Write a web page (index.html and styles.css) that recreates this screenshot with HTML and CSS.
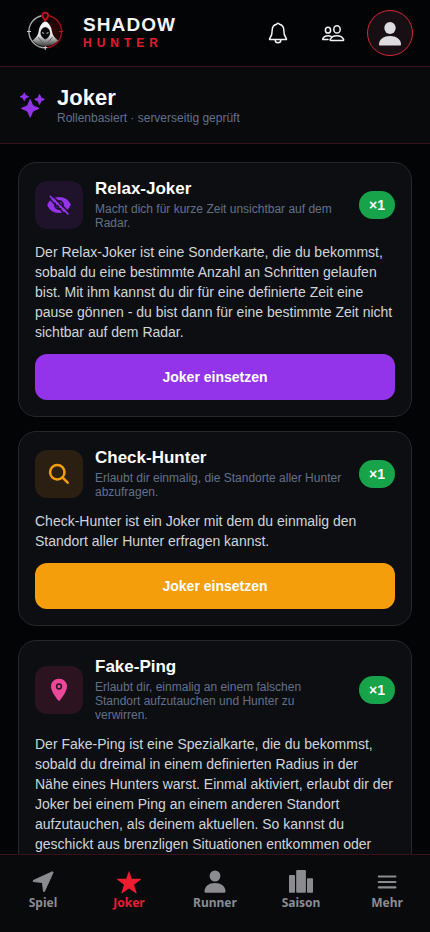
FILE: index.html
```html
<!DOCTYPE html>
<html lang="de">
<head>
<meta charset="utf-8">
<meta name="viewport" content="width=device-width, initial-scale=1">
<title>Shadow Hunter</title>
<link rel="stylesheet" href="styles.css">
</head>
<body>
<div class="app">
  <header class="topbar">
    <svg class="logo" viewBox="0 0 50 50">
      <defs>
        <linearGradient id="cloak" x1="0" y1="0" x2="0" y2="1"><stop offset="0" stop-color="#ffffff"/><stop offset=".6" stop-color="#dcdcdc"/><stop offset="1" stop-color="#3a3a3a"/></linearGradient>
        <radialGradient id="glow"><stop offset="0" stop-color="#350305"/><stop offset="1" stop-color="#150204"/></radialGradient>
      </defs>
      <path d="M25.300 10a16.200 16.200 0 0 1 0 33z" fill="url(#glow)"/>
      <path d="M21.500 10.700A16.200 16.200 0 0 0 25.300 42.700" fill="none" stroke="#a8a8a8" stroke-width="1.400"/>
      <path d="M29 10.700A16.200 16.200 0 0 1 25.300 42.700" fill="none" stroke="#a0121b" stroke-width="1.400"/>
      <path d="M7 26.500h4M25.300 40v5M23.300 42.500h4" stroke="#ccc" stroke-width="1"/>
      <path d="M39 26.500h4" stroke="#b5161f" stroke-width="1"/>
      <path d="M25.300 16c-4 2-6 5.500-6.700 10.500-.5 4-2.800 6.500-6.100 9 3.200 3.500 7.600 5.700 12.800 5.700s9.600-2.200 12.800-5.700c-3.300-2.500-5.600-5-6.100-9-.7-5-2.700-8.500-6.700-10.500z" fill="url(#cloak)"/>
      <path d="M25.300 22c-3 .8-4.600 2.800-4.800 5.800-.1 3.200 2.200 5.400 4.800 6.700 2.600-1.300 4.900-3.500 4.800-6.700-.2-3-1.800-5-4.800-5.800z" fill="#090a0b"/>
      <path d="M21.900 27l2.300 1-.2.700-1.700-.4zM28.700 27l-2.300 1 .2.700 1.700-.4z" fill="#ddd"/>
      <path d="M18 32l5 6M32.600 32l-5 6" stroke="#555" stroke-width=".9"/>
      <path d="M25.300 15.700c-1.700-2.300-2.900-3.300-2.900-5.100a2.900 2.900 0 0 1 5.800 0c0 1.800-1.200 2.800-2.900 5.100z" fill="#240305" stroke="#c8131d" stroke-width="1.700"/>
    </svg>
    <div class="brand">
      <div class="brand-main">SHADOW</div>
      <div class="brand-sub">HUNTER</div>
    </div>
    <svg class="bell" viewBox="0 0 22 24" fill="none" stroke="#f4f4f4" stroke-width="1.500" stroke-linecap="round" stroke-linejoin="round">
      <path d="M11 2.200c-.8 0-1.200.5-1.400 1.100C6.700 4 5.200 6.300 5.200 9.300c0 4.200-.8 5.700-1.900 7.200-.6.800-1 1.200-.8 1.700.1.300.4.400.8.400h15.400c.4 0 .7-.1.800-.4.200-.5-.2-.9-.8-1.700-1.100-1.500-1.900-3-1.900-7.200 0-3-1.500-5.300-4.400-6-.2-.6-.6-1.100-1.400-1.100zM8.200 19a2.800 2.800 0 0 0 5.600 0"/>
    </svg>
    <svg class="people" viewBox="0 0 24 18" fill="none" stroke="#f4f4f4" stroke-width="1.500" stroke-linejoin="round" stroke-linecap="round">
      <ellipse cx="7" cy="5.200" rx="2.600" ry="2.900"/><ellipse cx="16" cy="4.400" rx="3.200" ry="3.600"/>
      <path d="M9.700 15.500h12.400c.5 0 .7-.4.500-.9-.9-2.300-3.600-3.900-6.700-3.900s-5.800 1.600-6.700 3.900c-.2.500 0 .9.500.9zM10 11.300c-.8-.4-1.800-.6-2.800-.6-2.600 0-4.800 1.300-5.500 3.200-.1.400.1.700.5.700H7"/>
    </svg>
    <div class="avatar"><svg viewBox="0 0 24 26" fill="#dedce0"><ellipse cx="12" cy="7" rx="5.700" ry="6"/><path d="M1 23.500C1 18 6 15 12 15s11 3 11 8.500c0 .5-.2.900-.7.900H1.700c-.5 0-.7-.4-.7-.9z"/></svg></div>
  </header>

  <section class="page-head">
    <svg class="sparkles" viewBox="0 0 26 26" fill="#9333ea" stroke="#9333ea" stroke-linejoin="round">
      <path d="M11.200 7.500L13.300 12.400Q13.900 13.800 15.300 14.400L20 16.400L15.300 18.400Q13.900 19 13.300 20.400L11.200 25.300L9.100 20.400Q8.500 19 7.100 18.400L2.400 16.400L7.100 14.400Q8.500 13.800 9.100 12.400z"/>
      <path d="M5.300.8L6.300 3.300L9.500 4.700L6.500 6L5.300 8.700L4.100 6L1.100 4.700L4.300 3.300z"/>
      <path d="M20.500 2.400L22 5.900L25.300 7.400L22 8.900L20.500 12.400L19 8.900L15.700 7.400L19 5.900z"/>
    </svg>
    <div>
      <h1>Joker</h1>
      <p>Rollenbasiert · serverseitig geprüft</p>
    </div>
  </section>

  <main class="cards">
    <article class="card">
      <div class="card-head">
        <div class="tile purple">
          <svg viewBox="0 0 24 24"><path d="M.2 12C2.200 6.700 6.500 4 12 4S21.800 7 23.800 11.500C21.800 17 17.500 19.900 12 19.900S2.200 17.300.2 12z" fill="#9333ea"/><circle cx="12" cy="12" r="4.100" fill="#9333ea" stroke="#211330" stroke-width="1.700"/><circle cx="12" cy="12" r="2" fill="#211330"/><path d="M1.500 4.700L19 22.200M5 2.200L22 19.200" stroke="#1e132b" stroke-width="1.500"/><path d="M3.300 3.300L20.900 20.900" stroke="#9333ea" stroke-width="1.700" stroke-linecap="round"/></svg>
        </div>
        <div class="card-title"><h2>Relax-Joker</h2><p>Macht dich für kurze Zeit unsichtbar auf dem<br>Radar.</p></div>
        <span class="count">×1</span>
      </div>
      <p class="body">Der Relax-Joker ist eine Sonderkarte, die du bekommst,<br>sobald du eine bestimmte Anzahl an Schritten gelaufen<br>bist. Mit ihm kannst du dir für eine definierte Zeit eine<br>pause gönnen - du bist dann für eine bestimmte Zeit nicht<br>sichtbar auf dem Radar.</p>
      <button class="use use-purple">Joker einsetzen</button>
    </article>

    <article class="card">
      <div class="card-head">
        <div class="tile orange">
          <svg viewBox="0 0 24 24" fill="none" stroke="#f59e0b" stroke-width="2.500" stroke-linecap="round"><circle cx="10.300" cy="10.200" r="7.200"/><path d="M15.700 15.600l5 5"/></svg>
        </div>
        <div class="card-title"><h2>Check-Hunter</h2><p>Erlaubt dir einmalig, die Standorte aller Hunter<br>abzufragen.</p></div>
        <span class="count">×1</span>
      </div>
      <p class="body">Check-Hunter ist ein Joker mit dem du einmalig den<br>Standort aller Hunter erfragen kannst.</p>
      <button class="use use-orange">Joker einsetzen</button>
    </article>

    <article class="card">
      <div class="card-head">
        <div class="tile pink">
          <svg viewBox="0 0 24 24"><path d="M12 .8c-4.500 0-8 3.200-8 7.400 0 5.100 5.300 11.900 7.300 14.400.4.500 1 .5 1.400 0C14.700 20.100 20 13.300 20 8.200 20 4 16.500.8 12 .8z" fill="#ec4899"/><circle cx="12" cy="8.500" r="2.400" fill="#ec4899" stroke="#2b1420" stroke-width="1.500"/></svg>
        </div>
        <div class="card-title"><h2>Fake-Ping</h2><p>Erlaubt dir, einmalig an einem falschen<br>Standort aufzutauchen und Hunter zu<br>verwirren.</p></div>
        <span class="count">×1</span>
      </div>
      <p class="body">Der Fake-Ping ist eine Spezialkarte, die du bekommst,<br>sobald du dreimal in einem definierten Radius in der<br>Nähe eines Hunters warst. Einmal aktiviert, erlaubt dir der<br>Joker bei einem Ping an einem anderen Standort<br>aufzutauchen, als deinem aktuellen. So kannst du<br>geschickt aus brenzligen Situationen entkommen oder</p>
    </article>
  </main>

  <nav class="tabs">
    <a class="tab"><svg viewBox="0 0 24 24"><path d="M21.500 1.700L2.300 10.500L2.300 11.500L11.500 12.500L12.500 21.500L13.400 21.500L22.100 2.400z" stroke="currentColor" stroke-width="1" stroke-linejoin="round"/></svg><span>Spiel</span></a>
    <a class="tab active"><svg viewBox="0 0 24 24"><path d="M12 .8l2.800 8h8.500c.7 0 .8.500.4.900l-6.700 5 2.600 8c.2.600-.3.900-.8.600L12 18.400l-6.800 4.900c-.5.300-1 0-.8-.6l2.600-8-6.700-5c-.4-.4-.3-.9.400-.9h8.500z"/></svg><span>Joker</span></a>
    <a class="tab"><svg viewBox="0 0 24 24"><ellipse cx="12" cy="6" rx="5.400" ry="5.600"/><path d="M1.500 21.500c0-5.200 4.500-8.400 10.500-8.400s10.500 3.200 10.500 8.400c0 .7-.3 1.200-1 1.200h-19c-.7 0-1-.5-1-1.200z"/></svg><span>Runner</span></a>
    <a class="tab"><svg viewBox="0 0 24 24"><rect x="0" y="5" width="6" height="17.800" rx=".8"/><rect x="7.200" y="0" width="9.700" height="22.800" rx="1"/><rect x="18" y="8.200" width="6" height="14.600" rx=".8"/></svg><span>Saison</span></a>
    <a class="tab"><svg viewBox="0 0 24 24"><path d="M3.800 6.500h16.600M3.800 12h16.600M3.800 17.300h16.600" stroke="#8c8c90" stroke-width="2.200" stroke-linecap="round"/></svg><span>Mehr</span></a>
  </nav>
</div>
</body>
</html>
```
FILE: styles.css
```css
* { box-sizing: border-box; margin: 0; padding: 0; }
body { background: #030406; font-family: "Liberation Sans", Arial, sans-serif; color: #fff; overflow: hidden; }
.app { height: 932px; display: flex; flex-direction: column; overflow: hidden; }

.topbar { height: 67px; flex: none; display: flex; align-items: center; padding: 0 17px 0 20px; border-bottom: 1px solid #3a111b; background: #030406; }
.logo { width: 50px; height: 50px; margin-top: -6px; }
.brand { margin: -2px 0 0 13px; flex: 1; }
.brand-main { font-size: 19px; line-height: 21px; font-weight: 700; letter-spacing: 1.1px; color: #f5f5f5; }
.brand-sub { margin-top: 1px; font-size: 12px; line-height: 15px; font-weight: 700; letter-spacing: 5px; color: #e11d2e; }
.bell { width: 22px; height: 24px; margin-right: 32px; }
.people { width: 24px; height: 18px; margin: 1px 22px 0 0; }
.avatar { width: 46px; height: 46px; border: 1px solid #d42a38; border-radius: 50%; background: #180f14; display: flex; align-items: center; justify-content: center; }
.avatar svg { width: 24px; height: 26px; margin-top: 2px; }

.page-head { height: 77px; flex: none; display: flex; align-items: center; padding-left: 19px; border-bottom: 1px solid #38111b; background: #080a0c; }
.sparkles { width: 26px; height: 26px; margin-right: 12px; }
.page-head h1 { font-size: 22px; line-height: 26px; }
.page-head p { font-size: 12px; line-height: 14px; color: #64708a; }

.cards { flex: 1; min-height: 0; overflow: hidden; padding: 18px 18px 0; display: flex; flex-direction: column; gap: 14px; }
.card { flex: none; border: 1px solid #25272a; border-radius: 18px; background: #0c0e11; padding: 16px; display: flex; flex-direction: column; gap: 12px; }
.card-head { display: flex; align-items: center; }
.tile { width: 48px; height: 48px; flex: none; border-radius: 12px; display: flex; align-items: center; justify-content: center; }
.tile svg { width: 24px; height: 24px; }
.purple { background: #1e132b; }
.orange { background: #2b1f11; }
.pink { background: #2b1420; }
.card-title { margin-left: 12px; flex: 1; }
.card-title h2 { font-size: 17px; line-height: 19px; margin-bottom: 4px; }
.card-title p { font-size: 12px; line-height: 14px; color: #64708a; white-space: nowrap; }
.count { height: 28px; width: 36px; border-radius: 14px; background: #16a34a; font-size: 14px; line-height: 28px; font-weight: 700; text-align: center; }
.body { font-size: 14px; line-height: 20px; color: #d1d5db; white-space: nowrap; }
.use { height: 46px; border: 0; border-radius: 12px; color: #fff; font: 700 14px "Liberation Sans", Arial, sans-serif; }
.use-purple { background: #9333ea; }
.use-orange { background: #f59e0b; }

.tabs { height: 78px; flex: none; display: flex; border-top: 1px solid #3a1019; background: #080a0c; padding-top: 15px; }
.tab { flex: 1; display: flex; flex-direction: column; align-items: center; color: #8c8c90; font: 700 12px/16px "Noto Sans", sans-serif; }
.tab svg { width: 24px; height: 24px; fill: currentColor; margin-bottom: 1px; }
.active { color: #ed1c2f; }
```
